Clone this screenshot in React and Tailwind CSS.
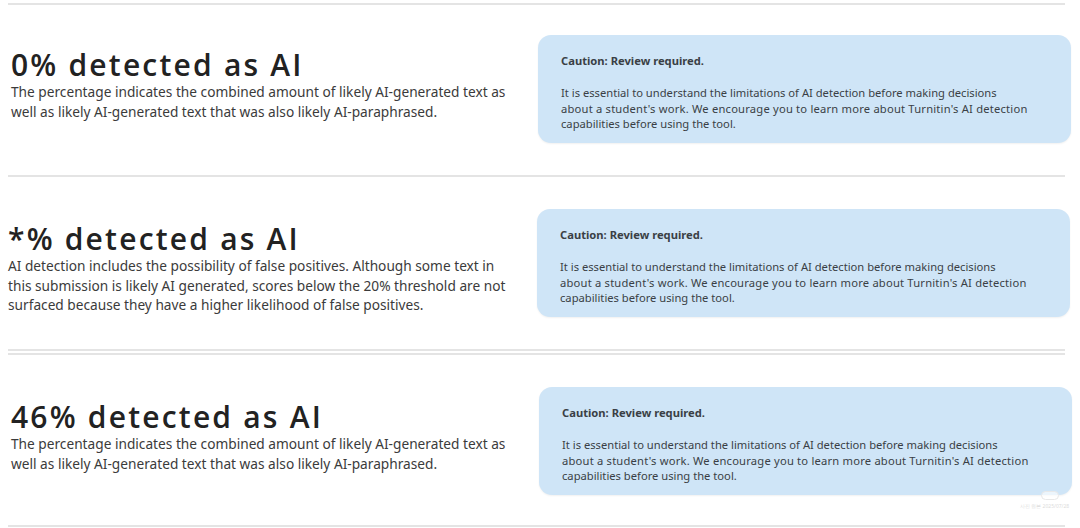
import React from 'react';

const sections = [
  {
    title: '0% detected as AI',
    lines: [
      'The percentage indicates the combined amount of likely AI-generated text as',
      'well as likely AI-generated text that was also likely AI-paraphrased.',
    ],
    pad: 'pl-[11px]',
    gap: 'ml-[22px]',
    height: 'h-[170px]',
    headTop: 'mt-[44px]',
    boxTop: 'mt-[30px]',
  },
  {
    title: '*% detected as AI',
    lines: [
      'AI detection includes the possibility of false positives. Although some text in',
      'this submission is likely AI generated, scores below the 20% threshold are not',
      'surfaced because they have a higher likelihood of false positives.',
    ],
    pad: 'pl-2',
    gap: 'ml-6',
    height: 'h-[172px]',
    headTop: 'mt-[46px]',
    boxTop: 'mt-[32px]',
  },
  {
    title: '46% detected as AI',
    lines: [
      'The percentage indicates the combined amount of likely AI-generated text as',
      'well as likely AI-generated text that was also likely AI-paraphrased.',
    ],
    pad: 'pl-[11px]',
    gap: 'ml-[23px]',
    height: 'h-[170px]',
    headTop: 'mt-[46px]',
    boxTop: 'mt-[32px]',
  },
];

const Divider = ({ className = '' }) => (
  <div className={`h-[2px] ml-2 w-[1057px] bg-[#e4e4e4] ${className}`} />
);

const CautionBox = () => (
  <div className="w-[533px] h-[108px] rounded-[13px] bg-[#cfe5f7] pl-[23px] pt-[19px] text-[#3a3f45] shadow-[0_1px_2px_rgba(0,0,0,0.06)]">
    <p className="text-[11.2px] font-bold leading-[14px]">Caution: Review required.</p>
    <p className="mt-[17px] text-[11.2px] leading-[15.5px] whitespace-nowrap">
      It is essential to understand the limitations of AI detection before making decisions
      <br />
      <span className="tracking-[0.2px]">about a student's work. We encourage you to learn more about Turnitin's AI detection</span>
      <br />
      capabilities before using the tool.
    </p>
  </div>
);

function Section({ title, lines, pad, gap, height, headTop, boxTop }) {
  return (
    <div className={`flex items-start ${height} ${pad}`}>
      <div className={`w-[505px] ${headTop}`}>
        <h2
          className="text-[30px] font-semibold leading-[32px] tracking-[2.2px] whitespace-nowrap text-[#222]"
          style={{ fontFamily: '"Open Sans", sans-serif' }}
        >
          {title}
        </h2>
        <p className="mt-[1px] text-[13.7px] leading-[19.5px] whitespace-nowrap text-[#3b3b3b]">
          {lines.map((l, i) => (
            <span key={i} className="block">{l}</span>
          ))}
        </p>
      </div>
      <div className={`${gap} ${boxTop}`}>
        <CautionBox />
      </div>
    </div>
  );
}

export default function App() {
  return (
    <div
      className="relative w-[1080px] h-[528px] overflow-hidden bg-white pt-[3px]"
      style={{ fontFamily: '"Noto Sans", "Open Sans", sans-serif' }}
    >
      <Divider />
      <Section {...sections[0]} />
      <Divider />
      <Section {...sections[1]} />
      <Divider />
      <Divider className="mt-[2px]" />
      <Section {...sections[2]} />
      <Divider />
      <div className="absolute left-[1041px] top-[491px] h-[9px] w-[18px] rounded-full border border-[#e8e8e8] bg-white/60" />
      <div className="absolute left-[1020px] top-[503px] text-[5px] text-[#dcdcdc]">사진 원본 2025/07/28</div>
    </div>
  );
}
